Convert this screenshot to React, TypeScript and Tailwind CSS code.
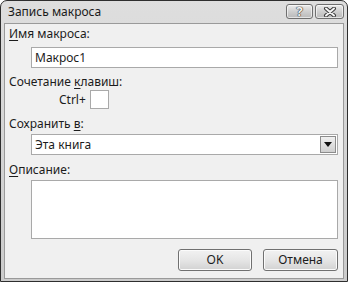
import React from 'react';

const font = "font-['Segoe_UI','Noto_Sans','Open_Sans',sans-serif]";

const Label = ({ u, rest, className = '' }: { u: string, rest: string, className?: string }) => (
  <div className={`h-[14px] leading-[14px] text-[12px] text-[#1c1c1c] ${className}`}>
    <span className="underline underline-offset-2 decoration-1">{u}</span>{rest}
  </div>
);

const TitleButton = ({ children, wide }: { children: React.ReactNode, wide?: boolean }) => (
  <div
    className={`h-[15px] ${wide ? 'w-[29px]' : 'w-[27px]'} rounded-[3px] border border-[#6f6f6f] bg-gradient-to-b from-[#ececec] via-[#cfcfcf] to-[#b9b9b9] flex items-center justify-center shadow-[inset_0_0_0_1px_rgba(255,255,255,0.6)]`}
  >
    {children}
  </div>
);

const Button = ({ label, className = '' }: { label: string, className?: string }) => (
  <div
    className={`h-[22px] rounded-[3px] border border-[#707070] bg-gradient-to-b from-[#f2f2f2] via-[#e6e6e6] to-[#d2d2d2] shadow-[inset_0_0_0_1px_#fbfbfb] flex items-center justify-center text-[12px] text-[#1c1c1c] ${className}`}
  >
    {label}
  </div>
);

const App = () => {
  return (
    <div className={`w-[348px] h-[282px] ${font} bg-white`}>
      <div className="w-full h-full flex flex-col rounded-t-[7px] border border-[#2e2e2e] bg-gradient-to-b from-[#dedede] to-[#cbcbcb]">
        {/* title bar */}
        <div className="h-[22px] flex items-start justify-between pl-[7px] pr-[3px]">
          <span className="mt-[3px] text-[12px] leading-[16px] text-[#1a1a1a]">Запись макроса</span>
          <div className="mt-[3px] flex gap-[2px]">
            <TitleButton>
              <span className="text-[13px] leading-[13px] font-bold text-[#f4f4f4] [text-shadow:0_0_1px_#333,0_0_1px_#333,0_0_1px_#333]">?</span>
            </TitleButton>
            <TitleButton wide>
              <svg width="14" height="10" viewBox="0 0 14 10">
                <path d="M3 1.5 L11 8.5 M11 1.5 L3 8.5" stroke="#3a3a3a" strokeWidth="4" strokeLinecap="round" />
                <path d="M3 1.5 L11 8.5 M11 1.5 L3 8.5" stroke="#f4f4f4" strokeWidth="2" strokeLinecap="round" />
              </svg>
            </TitleButton>
          </div>
        </div>

        {/* content */}
        <div className="flex-1 mx-[3px] mb-[2px] border border-[#9a9a9a] bg-[#f0f0f0] pl-[4px] pr-[5px] flex flex-col">
          <Label u="И" rest="мя макроса:" className="mt-[3px]" />
          <div className="mt-[6px] ml-[22px] h-[21px] border border-[#a9a9a9] bg-white flex items-center pl-[3px] text-[12px] text-[#1c1c1c]">
            Макрос1
          </div>

          <div className="mt-[7px] h-[14px] leading-[14px] text-[12px] text-[#1c1c1c]">
            Сочетание <span className="underline underline-offset-2 decoration-1">к</span>лавиш:
          </div>
          <div className="mt-[1px] flex items-center gap-[4px] pl-[50px]">
            <span className="text-[12px] text-[#1c1c1c]">Ctrl+</span>
            <div className="w-[19px] h-[19px] border border-[#a9a9a9] bg-white" />
          </div>

          <div className="mt-[8px] h-[14px] leading-[14px] text-[12px] text-[#1c1c1c]">
            Сохранить <span className="underline underline-offset-2 decoration-1">в</span>:
          </div>
          <div className="mt-[3px] ml-[22px] h-[21px] border border-[#a9a9a9] bg-white flex items-center justify-between pl-[3px] pr-[1px] text-[12px] text-[#1c1c1c]">
            <span>Эта книга</span>
            <div className="w-[16px] h-[17px] border border-[#8c8c8c] bg-gradient-to-b from-[#f0f0f0] to-[#cfcfcf] flex items-center justify-center">
              <svg width="8" height="5" viewBox="0 0 8 5">
                <path d="M0 0 H8 L4 5 Z" fill="#111" />
              </svg>
            </div>
          </div>

          <Label u="О" rest="писание:" className="mt-[8px]" />
          <div className="mt-[3px] ml-[22px] h-[59px] border border-[#a9a9a9] bg-white" />

          <div className="mt-[10px] flex justify-end gap-[11px]">
            <Button label="OK" className="w-[74px]" />
            <Button label="Отмена" className="w-[75px]" />
          </div>
        </div>
      </div>
    </div>
  );
};

export default App;
